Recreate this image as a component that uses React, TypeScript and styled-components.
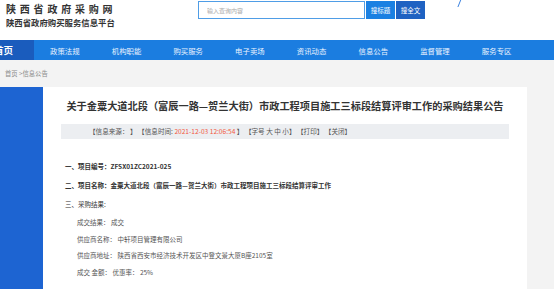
import styled, { createGlobalStyle } from "styled-components";

const GlobalStyle = createGlobalStyle`
  html, body {
    margin: 0;
    padding: 0;
    background: #f3f3f3;
    font-family: "Noto Sans CJK SC", "Liberation Sans", sans-serif;
    overflow: hidden;
  }
`;

const navItems = [
  "政策法规",
  "机构职能",
  "购买服务",
  "电子卖场",
  "资讯动态",
  "信息公告",
  "监督管理",
  "服务专区",
];

const details = [
  { label: "成交结果：", value: " 成交" },
  { label: "供应商名称：", value: " 中轩项目管理有限公司" },
  { label: "供应商地址：", value: " 陕西省西安市经济技术开发区中登文景大厦B座2105室" },
  { label: "成交 金额：", value: " 优惠率： 25%" },
];

export default function App() {
  return (
    <Page>
      <GlobalStyle />
      <Header>
        <Brand>
          <SiteName>陕西省政府采购网</SiteName>
          <SiteSub>陕西省政府购买服务信息平台</SiteSub>
        </Brand>
        <Search>
          <SearchInput placeholder="输入查询内容" />
          <SearchButton>搜标题</SearchButton>
          <SearchButton $dark>搜全文</SearchButton>
        </Search>
        <Slash />
      </Header>
      <Nav>
        <HomeTab>
          <span>首页</span>
        </HomeTab>
        {navItems.map((item) => (
          <NavItem key={item}>{item}</NavItem>
        ))}
      </Nav>
      <Crumbs>首页 &gt;信息公告</Crumbs>
      <Body>
        <Sidebar />
        <Panel>
          <Title>
            关于金粟大道北段（富辰一路—贺兰大街）市政工程项目施工三标段结算评审工作的采购结果公告
          </Title>
          <InfoBar>
            【信息来源： 】 【信息时间: <DateText>2021-12-03 12:06:54</DateText> 】 【字号 大 中 小】 【打印】 【关闭】
          </InfoBar>
          <Article>
            <Heading>一、项目编号：ZFSX01ZC2021-025</Heading>
            <Heading>
              二、项目名称：金粟大道北段（富辰一路—贺兰大街）市政工程项目施工三标段结算评审工作
            </Heading>
            <Heading $light>三、采购结果:</Heading>
            {details.map((d) => (
              <Detail key={d.label}>
                {d.label}
                {d.value}
              </Detail>
            ))}
          </Article>
        </Panel>
      </Body>
    </Page>
  );
}

const Page = styled.div`
  width: 554px;
  height: 289px;
  overflow: hidden;
`;

const Header = styled.div`
  height: 40px;
  background: #fff;
  display: flex;
  align-items: flex-start;
  position: relative;
`;

const Brand = styled.div`
  padding: 3px 0 0 6px;
  width: 192px;
`;

const SiteName = styled.div`
  font-size: 10px;
  font-weight: 700;
  letter-spacing: 3.8px;
  color: #333;
  line-height: 12px;
`;

const SiteSub = styled.div`
  margin-top: 2px;
  font-size: 8.4px;
  font-weight: 700;
  color: #333;
  line-height: 11px;
`;

const Search = styled.div`
  display: flex;
  gap: 1px;
  padding-top: 1px;
`;

const SearchInput = styled.input`
  box-sizing: border-box;
  width: 167px;
  height: 18px;
  border: 1px solid #4f9de6;
  padding: 0 0 0 8px;
  font-size: 6px;
  font-family: inherit;
  outline: none;
  &::placeholder {
    color: #aaa;
  }
`;

const SearchButton = styled.button<{ $dark?: boolean }>`
  width: 29px;
  height: 18px;
  border: none;
  padding: 0;
  background: ${(p) => (p.$dark ? "#1f62c2" : "#1a80e2")};
  color: #fff;
  font-size: 6.5px;
  font-family: inherit;
`;

const Slash = styled.div`
  position: absolute;
  left: 459px;
  top: -1px;
  width: 1.3px;
  height: 8px;
  background: #3b82e0;
  transform: skewX(-22deg);
`;

const Nav = styled.div`
  height: 20px;
  background: #1b7de0;
  display: flex;
  align-items: center;
`;

const HomeTab = styled.div`
  width: 34px;
  height: 100%;
  background: #1a5cbd;
  display: flex;
  align-items: center;
  overflow: hidden;
  span {
    margin-left: -6px;
    color: #fff;
    font-size: 9.5px;
    font-weight: 700;
    white-space: nowrap;
  }
`;

const NavItem = styled.div`
  width: 61.7px;
  text-align: center;
  color: #eaf3ff;
  font-size: 7.4px;
`;

const Crumbs = styled.div`
  height: 27px;
  padding-left: 5px;
  font-size: 6.3px;
  color: #8a8a8a;
  line-height: 27px;
`;

const Body = styled.div`
  display: flex;
  height: 202px;
`;

const Sidebar = styled.div`
  width: 43px;
  background: #1d64d2;
`;

const Panel = styled.div`
  width: 484px;
  background: #fff;
  padding: 0 18px;
  box-sizing: border-box;
`;

const Title = styled.h1`
  margin: 12px 0 0;
  font-size: 10.2px;
  font-weight: 700;
  color: #333;
  text-align: center;
  line-height: 14px;
  white-space: nowrap;
`;

const InfoBar = styled.div`
  margin-top: 11px;
  height: 15px;
  background: #eceef1;
  padding-left: 28px;
  font-size: 6.6px;
  color: #555;
  line-height: 15px;
  white-space: pre;
`;

const DateText = styled.span`
  color: #f2593f;
`;

const Article = styled.div`
  padding: 18px 0 0 4px;
`;

const Heading = styled.div<{ $light?: boolean }>`
  height: 19px;
  font-size: 6.5px;
  font-weight: ${(p) => (p.$light ? 400 : 700)};
  color: #333;
  line-height: 19px;
  white-space: nowrap;
`;

const Detail = styled.div`
  height: 16.5px;
  padding-left: 12px;
  font-size: 6.5px;
  color: #555;
  line-height: 16.5px;
  white-space: pre;
`;
